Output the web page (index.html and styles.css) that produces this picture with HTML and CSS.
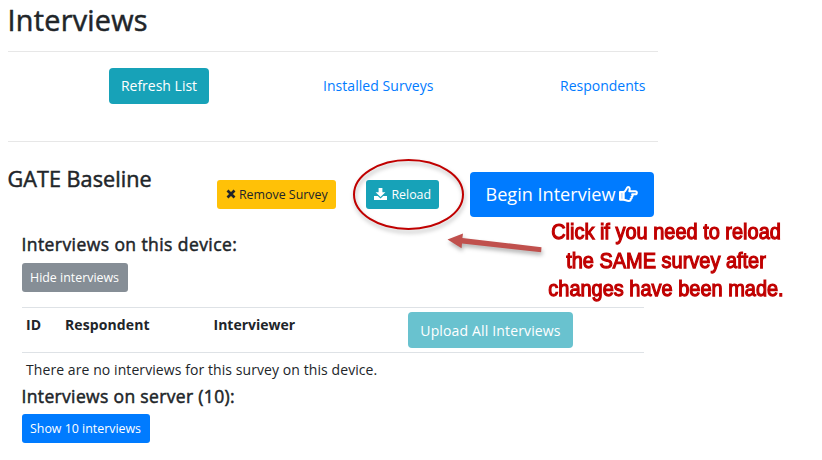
FILE: index.html
```html
<!DOCTYPE html>
<html lang="en">
<head>
<meta charset="utf-8">
<title>Interviews</title>
<link rel="stylesheet" href="styles.css">
</head>
<body>
<main class="page">
  <h1 class="title">Interviews</h1>
  <nav class="tabs">
    <button class="btn info refresh">Refresh List</button>
    <a class="installed">Installed Surveys</a>
    <a class="respondents">Respondents</a>
  </nav>
  <section class="survey">
    <h2 class="name">GATE Baseline</h2>
    <button class="btn small warning"><svg class="cross" viewBox="0 0 10 10"><path d="M1.5 1.5 8.5 8.5M8.5 1.5 1.5 8.5"/></svg><span>Remove Survey</span></button>
    <button class="btn small info reload"><svg class="download" viewBox="0 0 13 12"><path d="M4.6 0h3.8v4.2h3L6.5 9 1.6 4.2h3z"/><path d="M0 8.1h3.8l2.7 2.4 2.7-2.4H13V12H0z"/></svg><span>Reload</span></button>
    <button class="btn primary begin"><span>Begin Interview</span><svg class="hand" viewBox="0 0 19 16"><path d="M4.700 6C7.600 5.400 7.300 1.200 9 1.100c1.900-.1 2 1.800 1.300 4.100h5.900c2.200 0 2.200 3.100 0 3.100h-3.100c1.100 1.200.5 2.300-.6 2.500.6 1 .1 2-.9 2.200.2 1.300-.5 1.900-1.800 1.900-2.500 0-3.200-1.100-5.100-1.100"/><path class="cuff" d="M1 6h3.700v7.800H1z"/></svg></button>
  </section>
  <section class="interviews">
    <h3 class="subtitle device">Interviews on this device:</h3>
    <button class="btn small secondary">Hide interviews</button>
    <div class="table">
      <div class="head">
        <b class="id">ID</b><b class="resp">Respondent</b><b class="viewer">Interviewer</b>
        <button class="btn info upload">Upload All Interviews</button>
      </div>
      <div class="empty"><span>There are no interviews for this survey on this device.</span></div>
    </div>
    <h3 class="subtitle server">Interviews on server (10):</h3>
    <button class="btn small primary show">Show 10 interviews</button>
  </section>
</main>
<svg class="marks" viewBox="0 0 822 460">
  <ellipse cx="408.5" cy="194.5" rx="54.5" ry="34.5"/>
  <path d="M447.500 239.500 463 233.500l-.6 4.400L541.500 247.300l-.4 5L462 243.500l-.4 4.800z"/>
</svg>
<p class="note">Click if you need to reload<br>the SAME survey after<br>changes have been made.</p>
</body>
</html>
```
FILE: styles.css
```css
* { box-sizing: border-box; }
body { margin: 0; width: 822px; height: 460px; overflow: hidden; background: #fff; color: #212529; font-family: "Open Sans", "Noto Sans", sans-serif; font-size: 14px; }
h1, h2, h3, p { margin: 0; }
.page { width: 658px; padding-left: 7.5px; white-space: nowrap; }
.title, .name, .subtitle { -webkit-text-stroke: .5px #212529; }
.title { height: 51px; font-size: 28.8px; letter-spacing: .25px; line-height: 40px; font-weight: 500; }
.tabs { height: 91px; display: flex; align-items: flex-start; padding-top: 15.5px; border-top: 1px solid #e7e7e7; border-bottom: 1px solid #e7e7e7; line-height: 36px; color: #007bff; }
.btn { border: 0; border-radius: 4px; padding: 0; color: #fff; font: inherit; display: flex; align-items: center; justify-content: center; height: 36px; flex: none; white-space: nowrap; }
.info { background: #17a2b8; }
.primary { background: #007bff; }
.warning { background: #ffc107; color: #212529; width: 119px; margin-left: 64.8px; gap: 3px; }
.secondary { background: #868e96; width: 106px; }
.small { height: 29px; border-radius: 3px; font-size: 12.4px; }
.refresh { width: 100px; margin-left: 101.5px; }
.installed { width: 111px; margin-left: 114px; letter-spacing: .05px; }
.respondents { width: 86px; margin-left: 126px; }
.survey { height: 90px; display: flex; align-items: flex-start; padding-top: 29.5px; }
.name { width: 145px; font-size: 21.6px; letter-spacing: .05px; line-height: 30px; font-weight: 500; margin-top: -7.5px; }
.survey .small { margin-top: 8px; }
.reload { width: 73.5px; margin-left: 29.7px; gap: 4px; }
.begin { width: 184px; height: 45px; margin-left: 30.5px; font-size: 18.1px; gap: 4px; }
.cross { width: 10px; height: 10px; fill: none; stroke: #212529; stroke-width: 2.7; }
.download { width: 13px; height: 12px; fill: #fff; }
.hand { width: 19px; height: 16px; fill: none; stroke: #fff; stroke-width: 2; stroke-linejoin: round; }
.cuff { fill: #fff; fill-opacity: .75; }
.interviews { width: 636px; padding-left: 14px; }
.subtitle { font-size: 17.5px; line-height: 24px; font-weight: 500; letter-spacing: .42px; }
.device { height: 30.5px; }
.table { margin-top: 15.5px; }
.head { height: 45px; border-top: 1px solid #dee2e6; display: flex; padding: 4px 0 0 4.5px; line-height: 25px; }
.id { width: 39px; }
.resp { width: 148.5px; letter-spacing: .1px; }
.viewer { width: 194.5px; }
.upload { width: 165px; background: #69c2cf; letter-spacing: .15px; }
.empty { height: 32px; border-top: 1px solid #dee2e6; padding-left: 4.5px; line-height: 34px; letter-spacing: .08px; }
.server { height: 30px; letter-spacing: .34px; }
.show { width: 128px; }
.marks { position: absolute; left: 0; top: 0; width: 822px; height: 460px; filter: drop-shadow(1px 3px 2px rgba(0,0,0,.3)); }
.marks ellipse { fill: none; stroke: #c00000; stroke-width: 2; }
.marks path { fill: #c0504d; }
.note { position: absolute; left: 516px; top: 217px; width: 300px; text-align: center; white-space: nowrap; color: #c00000; font: 22.7px/28.5px "Liberation Sans", Arial, sans-serif; -webkit-text-stroke: 1.25px #c00000; transform: scaleX(.88); }
```
